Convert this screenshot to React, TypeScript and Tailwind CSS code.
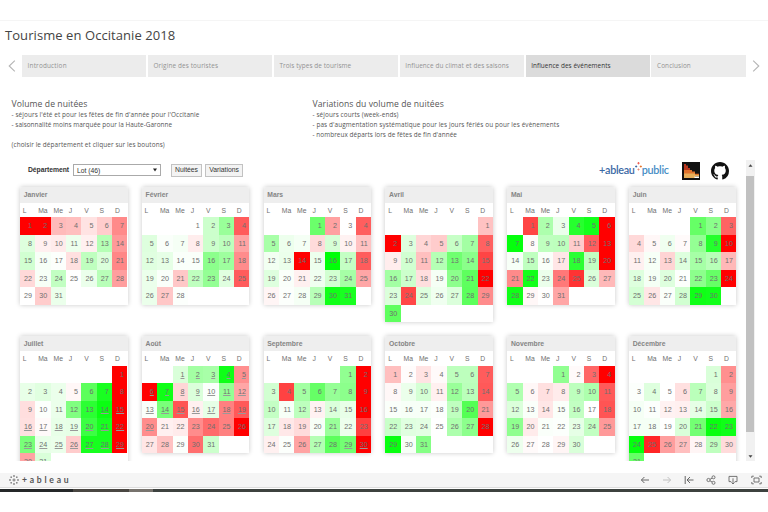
import React from "react";

type Month = {
  name: string;
  start: number;
  // Signed strength of each day, in percent: positive is green, negative is red.
  days: number[];
  underlined?: number[];
};

const range = (a: number, b: number) => Array.from({ length: b - a + 1 }, (_, i) => a + i);

const MONTHS: Month[] = [
  { name: "Janvier", start: 0, days: [-100, -100, -27, -25, -11, -20, -46, 13, -6, -8, 7, -6, 29, -40, 18, 3, 1, -12, 25, 14, -47, -15, 3, 24, 0, 8, 28, -38, 0, -20, 8] },
  { name: "Février", start: 3, days: [0, 20, 40, -64, 13, 2, 4, -7, 20, 26, -36, 12, 10, 2, 2, 45, 38, -45, 8, 2, -22, 25, 42, 12, -64, 8, -22, 1] },
  { name: "Mars", start: 3, days: [58, -37, 0, -63, 34, 7, 4, -14, 16, -5, -24, 5, 8, -100, 7, 100, 23, -64, 13, 2, -6, 6, 18, 35, -35, -4, 1, 4, 28, 94, 90] },
  { name: "Avril", start: 6, days: [-24, -100, 13, -16, -20, 22, 36, -62, -7, 18, -25, 29, 56, 46, -73, 36, 20, -13, 4, 45, 63, -100, 14, -72, 13, 6, 14, 64, -45, 63] },
  { name: "Mai", start: 1, days: [-73, 32, 8, 85, 92, -100, 98, -2, 25, 26, -20, -63, -100, 3, 25, 2, -10, 83, 24, -100, -46, 93, 8, -53, -80, 14, -28, 94, -3, 0, -35] },
  { name: "Juin", start: 4, days: [60, 46, -61, -15, -3, 6, -2, 42, 86, -100, -6, 3, -17, 13, 35, 28, -28, 13, 4, 13, 1, 45, 60, -100, 17, -10, 2, 18, 94, 93] },
  { name: "Juillet", start: 6, days: [-100, 9, 12, 8, -3, 64, 90, -100, -13, 1, 8, 50, 83, 96, -100, -12, -2, 9, 10, 77, 91, -100, 53, 9, 8, -20, 91, 91, -100, -36, 15], underlined: range(14, 31) },
  { name: "Août", start: 2, days: [15, 36, 34, 94, -44, -100, 94, -16, 14, 1, 42, -35, 2, 52, -67, -6, 10, -50, -65, -45, -6, -8, -45, -58, -50, -100, -10, -24, 1, -57, 20], underlined: range(1, 20) },
  { name: "Septembre", start: 5, days: [43, -100, 18, -74, 36, 60, 41, 45, -100, 23, 3, 26, -5, 14, 9, -100, 13, -9, -14, 3, 40, 7, -75, -6, 1, -36, 30, 64, 55, -100], underlined: [29, 30] },
  { name: "Octobre", start: 0, days: [-25, -1, -11, -2, 26, 26, -64, -3, 8, 17, -6, 40, 27, -65, 2, 3, 3, 1, 25, 67, -40, 21, 12, 11, 0, 32, 45, -100, 97, 3, 48] },
  { name: "Novembre", start: 3, days: [43, -2, -60, -100, 31, -3, -12, -8, 26, 32, -65, 14, 2, -10, 2, 24, 0, -67, 44, -8, 2, 1, 10, 24, -40, 7, -2, 0, -4, 15] },
  { name: "Décembre", start: 5, days: [15, -44, 1, 13, 0, -12, 27, 14, -38, 4, 1, -5, -6, 10, 20, -34, 4, 4, 0, 15, 55, 97, 94, 98, -85, -38, -25, -4, 25, -14, 60] },
];

const WEEK = ["L", "Ma", "Me", "J", "V", "S", "D"];

function shade(v: number) {
  const k = Math.round(255 * (1 - Math.abs(v) / 100));
  return v >= 0 ? `rgb(${k},255,${Math.min(255, k + (v > 70 ? 8 : 0))})` : `rgb(255,${k},${k})`;
}

function Calendar({ m }: { m: Month }) {
  return (
    <div className="w-[107.5px] rounded-t-[2px] bg-white shadow-[0_0_5px_rgba(0,0,0,0.22)]">
      <div className="h-[15.3px] rounded-t-[2px] bg-[#eeeeee] pl-[3.7px] text-[6.8px] leading-[15.6px] font-bold text-[#858585]">{m.name}</div>
      <div className="grid h-[14.7px] grid-cols-7">
        {WEEK.map((d) => (
          <span key={d} className="pl-[2.8px] text-[6.8px] leading-[16px] text-[#707070]">{d}</span>
        ))}
      </div>
      <div className="grid auto-rows-[17.5px] grid-cols-7">
        {range(1, m.start).map((i) => (
          <span key={"b" + i} />
        ))}
        {m.days.map((v, i) => (
          <span key={i} className="pr-[3.4px] text-right text-[7.2px] leading-[17px] text-[#6f6f6f]" style={{ backgroundColor: shade(v) }}>
            <span className={m.underlined?.includes(i + 1) ? "underline decoration-[#999] decoration-[0.7px] underline-offset-1" : ""}>{i + 1}</span>
          </span>
        ))}
      </div>
    </div>
  );
}

const TABS = ["Introduction", "Origine des touristes", "Trois types de tourisme", "Influence du climat et des saisons", "Influence des événements", "Conclusion"];
const TAB_TRACKING = ["tracking-[0.18px]", "tracking-[0.13px]", "tracking-[0.08px]", "tracking-[0.1px]", "tracking-[0.06px]", "tracking-[0.1px]"];

function Chevron({ flip }: { flip?: boolean }) {
  return (
    <svg width="8" height="12" viewBox="0 0 8 12" fill="none" stroke="#b5b5b5" strokeWidth="1.1" className={flip ? "rotate-180" : ""}>
      <path d="M6.8 .6 1.2 6l5.6 5.4" />
    </svg>
  );
}

function TableauPublic() {
  return (
    <div className="flex h-[14px] w-[71px] items-center font-['Lato','Liberation_Sans',sans-serif] text-[10.8px] leading-[14px] font-semibold tracking-[-0.28px]">
      <span className="text-[#3c69a5]">+ableau</span>
      <svg width="7" height="14" viewBox="0 0 7 14" className="-mt-[3px] shrink-0">
        <g strokeWidth="1">
          <path d="M3.5 1v2.4M2.3 2.2h2.4" stroke="#ef665b" />
          <path d="M1.2 4.5v2M.2 5.5h2" stroke="#3c69a5" />
          <path d="M5.8 4.5v2M4.8 5.5h2" stroke="#e8762d" />
          <path d="M3.5 7.5v2M2.5 8.5h2" stroke="#e58a78" />
        </g>
      </svg>
      <span className="text-[#468dc5]">public</span>
    </div>
  );
}

function Pyramid() {
  return (
    <svg width="18" height="18" viewBox="0 0 18 18">
      <path fill="#111" d="M0 0h18v18H0z" />
      <path fill="#b7361e" d="M2 2h2v1.5h2V6h2v2h2v2H2z" />
      <path fill="#df722c" d="M2 8h8v1.5h3v2.3h4V14H2z" />
      <path fill="#e7ae59" d="M2 11.5h11V13h4v1.4h-4V16H2z" />
      <path fill="#fff" d="M12.5 14.5H17V16h-4.5z" />
    </svg>
  );
}

function Github() {
  return (
    <svg width="18" height="18" viewBox="0 0 16 16" fill="#111">
      <path d="M8 0C3.58 0 0 3.58 0 8c0 3.54 2.29 6.53 5.47 7.59.4.07.55-.17.55-.38 0-.19-.01-.82-.01-1.49-2.01.37-2.53-.49-2.69-.94-.09-.23-.48-.94-.82-1.13-.28-.15-.68-.52-.01-.53.63-.01 1.08.58 1.23.82.72 1.21 1.87.87 2.33.66.07-.52.28-.87.51-1.07-1.78-.2-3.64-.89-3.64-3.95 0-.87.31-1.59.82-2.15-.08-.2-.36-1.02.08-2.12 0 0 .67-.21 2.2.82.64-.18 1.32-.27 2-.27s1.36.09 2 .27c1.53-1.04 2.2-.82 2.2-.82.44 1.1.16 1.92.08 2.12.51.56.82 1.27.82 2.15 0 3.07-1.87 3.75-3.65 3.95.29.25.54.73.54 1.48 0 1.07-.01 1.93-.01 2.2 0 .21.15.46.55.38A8.01 8.01 0 0 0 16 8c0-4.42-3.58-8-8-8z" />
    </svg>
  );
}

function FooterIcons() {
  return (
    <div className="flex items-center gap-[12.1px] pr-[4.5px]">
      <svg width="10" height="10" viewBox="0 0 10 10" fill="none" stroke="#666" strokeWidth="1"><path d="M9 5H1.5M4.4 2 1.4 5l3 3" /></svg>
      <svg width="10" height="10" viewBox="0 0 10 10" fill="none" stroke="#c0c0c0" strokeWidth="1"><path d="M1 5h7.5M5.6 2l3 3-3 3" /></svg>
      <svg width="10" height="10" viewBox="0 0 10 10" fill="none" stroke="#666" strokeWidth="1"><path d="M1.2 1v8M9.5 5H3M6 2 3 5l3 3" /></svg>
      <svg width="10" height="10" viewBox="0 0 10 10" fill="none" stroke="#666" strokeWidth=".9"><circle cx="2.5" cy="5" r="1.6" /><circle cx="7.5" cy="2.3" r="1.5" /><circle cx="7.5" cy="7.8" r="1.5" /><path d="m4 4.3 2.1-1.2M4 5.8l2.1 1.2" /></svg>
      <svg width="10" height="10" viewBox="0 0 10 10" fill="none" stroke="#666" strokeWidth=".9"><path d="M3.2 6.6H1V1.4h8v5.2H6.8M5 3.3V9M3.4 7.4 5 9l1.6-1.6" /></svg>
      <svg width="11" height="10" viewBox="0 0 11 10" fill="none" stroke="#666" strokeWidth=".9"><path d="M3 3h5v4H3zM.8 3V1.2h2M8.2 1.2h2V3M10.2 7v1.8h-2M2.8 8.8h-2V7" /></svg>
    </div>
  );
}

export default function App() {
  return (
    <div className="flex h-[512px] w-[768px] flex-col overflow-hidden bg-white pt-[20px] font-['Liberation_Sans',Arial,sans-serif]">
      <div className="flex h-[469px] w-full shrink-0 flex-col border-t border-[#f5f5f5]">
        <div className="h-[34.3px] pt-[5px] pl-[5px] font-['Open_Sans','Noto_Sans',sans-serif] text-[13px] leading-[19px] tracking-[0.07px] whitespace-nowrap text-[#444]">
          <span>Tourisme en Occitanie 2018</span>
        </div>

        <nav className="flex h-[21.6px] items-center pl-[8px]">
          <Chevron />
          <div className="ml-[6px] flex h-full w-[724.3px] gap-[1.6px] overflow-hidden font-['Open_Sans','Noto_Sans',sans-serif] text-[6.4px] whitespace-nowrap">
            {TABS.map((t, i) => (
              <div key={t} className={`h-full pl-[5.6px] leading-[21px] ${TAB_TRACKING[i]} ${i === 5 ? "w-[95px]" : "w-[124.3px]"} shrink-0 ${i === 4 ? "bg-[#dbdbdb] text-[#333]" : "bg-[#ececec] text-[#929292]"}`}>
                <span>{t}</span>
              </div>
            ))}
          </div>
          <div className="ml-[5.5px]"><Chevron flip /></div>
        </nav>

        <div className="flex h-[81px] pt-[21px] pl-[11.5px] font-['Open_Sans','Noto_Sans',sans-serif] text-[6.4px] leading-[9.8px] tracking-[0.1px] whitespace-nowrap text-[#555]">
          <div className="w-[301px]">
            <div className="h-[12.5px] text-[8.6px] leading-[12px] tracking-[0.08px] text-[#555]"><span>Volume de nuitées</span></div>
            <div>- séjours l'été et pour les fêtes de fin d'année pour l'Occitanie</div>
            <div className="tracking-[0.04px]">- saisonnalité moins marquée pour la Haute-Garonne</div>
            <div className="pt-[9.8px]">(choisir le département et cliquer sur les boutons)</div>
          </div>
          <div>
            <div className="h-[12.5px] text-[8.6px] leading-[12px] tracking-[0.08px] text-[#555]"><span>Variations du volume de nuitées</span></div>
            <div>- séjours courts (week-ends)</div>
            <div>- pas d'augmentation systématique pour les jours fériés ou pour les évènements</div>
            <div className="tracking-[0.06px]">- nombreux départs lors de fêtes de fin d'année</div>
          </div>
        </div>

        <div className="mt-[2.4px] flex h-[300.9px] shrink-0">
          <div className="w-[745.5px] shrink-0 overflow-hidden">
            <div className="flex h-[26px] items-start pl-[28px] text-[6.8px] text-[#333]">
              <span className="w-[45px] pt-[4.6px] leading-[10px] font-bold tracking-[-0.05px]">Département</span>
              <div className="mt-[3.7px] flex h-[12.5px] w-[87.5px] items-center justify-between border border-[#aaa] px-[3px] tracking-[-0.02px]">
                <span className="pt-px">Lot (46)</span>
                <svg width="4" height="4" viewBox="0 0 4 4"><path d="M0 .4h4L2 3.6z" fill="#222" /></svg>
              </div>
              <div className="mt-[3.3px] ml-[10.5px] flex h-[13px] w-[31px] items-center justify-center border border-[#c2c2c2] bg-[#f3f3f3]">Nuitées</div>
              <div className="mt-[3.3px] ml-[3px] flex h-[13px] w-[38px] items-center justify-center border border-[#c2c2c2] bg-[#f3f3f3]">Variations</div>
              <div className="mt-[2.4px] ml-auto"><TableauPublic /></div>
              <div className="mt-[1.6px] ml-[12px]"><Pyramid /></div>
              <div className="mt-[1.6px] mr-[16.5px] ml-[11px]"><Github /></div>
            </div>
            <div className="grid grid-cols-[repeat(6,121.8px)] pt-[1.2px] pl-[20px]">
              {MONTHS.slice(0, 6).map((m) => (
                <div key={m.name} className="h-[148.1px]"><Calendar m={m} /></div>
              ))}
              {MONTHS.slice(6).map((m) => (
                <div key={m.name} className="h-[124px]"><Calendar m={m} /></div>
              ))}
            </div>
          </div>
          <div className="flex w-[9px] flex-col items-center bg-[#f1f1f1]">
            <svg width="9" height="16" viewBox="0 0 9 16"><path d="M2.5 6.7 4.5 4.2l2 2.5z" fill="#444" /></svg>
            <div className="w-[7.4px] flex-1 bg-[#c1c1c1]" />
            <svg width="9" height="29" viewBox="0 0 9 29"><path d="m2.5 23.2 2 2.5 2-2.5z" fill="#444" /></svg>
          </div>
        </div>

        <footer className="mt-auto mb-[1.3px] flex h-[15px] shrink-0 items-center justify-between border-b border-[#ddd] bg-[#f5f5f5] pr-[2px] pl-[9px]">
          <div className="flex items-center gap-[3px] text-[#555]">
            <svg width="10" height="10" viewBox="0 0 10 10" stroke="#666" strokeWidth=".8"><path d="M5 3.4v3.2M3.4 5h3.2M5 .2v1.6M4.2 1h1.6M5 8.2v1.6M4.2 9h1.6M1 4.2v1.6M.2 5h1.6M9 4.2v1.6M8.2 5h1.6M2.2 1.5v1.4M1.5 2.2h1.4M7.8 1.5v1.4M7.1 2.2h1.4M2.2 7.1v1.4M1.5 7.8h1.4M7.8 7.1v1.4M7.1 7.8h1.4" /></svg>
            <span className="font-['Lato','Liberation_Sans',sans-serif] text-[8.6px] leading-[10px] font-bold tracking-[2.75px]">+ableau</span>
          </div>
          <FooterIcons />
        </footer>
      </div>
      <div className="flex h-[3px] shrink-0 bg-[#3d423f]">
        <div className="w-[73px] bg-[#252829]" />
        <div className="w-[56px] bg-[#4a4742]" />
        <div className="w-[24px] bg-[#77736d]" />
      </div>
    </div>
  );
}
